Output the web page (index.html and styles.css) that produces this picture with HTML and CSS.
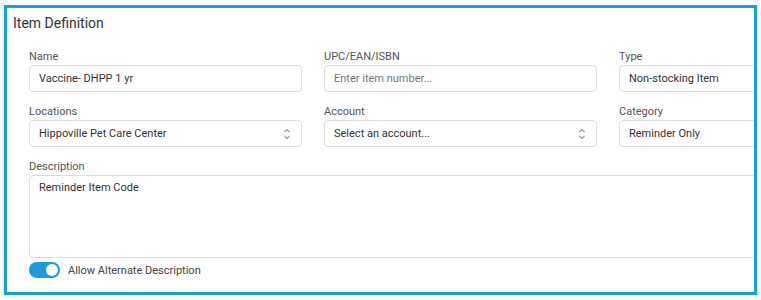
FILE: index.html
```html
<!DOCTYPE html>
<html lang="en">
<head>
    <meta charset="UTF-8">
    <meta name="viewport" content="width=device-width, initial-scale=1.0">
    <title>Item Definition</title>
    <link rel="stylesheet" href="styles.css">
</head>
<body>
    <div class="panel">
        <h2 class="panel-title">Item Definition</h2>

        <div class="form-grid">
            <div class="field">
                <label>Name</label>
                <div class="input">Vaccine- DHPP 1 yr</div>
            </div>
            <div class="field">
                <label>UPC/EAN/ISBN</label>
                <div class="input placeholder">Enter item number...</div>
            </div>
            <div class="field">
                <label>Type</label>
                <div class="input">Non-stocking Item</div>
            </div>

            <div class="field">
                <label>Locations</label>
                <div class="input select">
                    <span>Hippoville Pet Care Center</span>
                    <svg class="chevrons" width="8" height="12" viewBox="0 0 8 12"><polyline points="1.5,4 4,1.5 6.5,4"/><polyline points="1.5,8 4,10.5 6.5,8"/></svg>
                </div>
            </div>
            <div class="field">
                <label>Account</label>
                <div class="input select">
                    <span>Select an account...</span>
                    <svg class="chevrons" width="8" height="12" viewBox="0 0 8 12"><polyline points="1.5,4 4,1.5 6.5,4"/><polyline points="1.5,8 4,10.5 6.5,8"/></svg>
                </div>
            </div>
            <div class="field">
                <label>Category</label>
                <div class="input">Reminder Only</div>
            </div>

            <div class="field wide">
                <label>Description</label>
                <div class="input textarea">Reminder Item Code</div>
            </div>
        </div>

        <div class="toggle-row">
            <span class="toggle"><span class="knob"></span></span>
            <span class="toggle-label">Allow Alternate Description</span>
        </div>
    </div>
</body>
</html>
```

FILE: styles.css
```css
body {
    margin: 0;
    background-color: white;
    font-family: Roboto, "Liberation Sans", Arial, sans-serif;
}

.panel {
    box-sizing: border-box;
    width: 753px;
    height: 290px;
    margin: 5px 0 0 4px;
    border: 3px solid #16a1dd;
    box-shadow: 0 1px 2px rgba(0,0,0,0.25);
    overflow: hidden;
    padding: 6px 6px;
}

.panel-title {
    margin: 0;
    font-size: 14px;
    font-weight: normal;
    line-height: 18px;
    color: #333;
}

.form-grid {
    display: grid;
    grid-template-columns: repeat(3, 273px);
    column-gap: 22px;
    row-gap: 11px;
    margin: 16px 0 0 16px;
}

.field {
    display: flex;
    flex-direction: column;
}

.field.wide {
    grid-column: 1 / -1;
}

.field label {
    font-size: 11px;
    line-height: 14px;
    color: #555;
    padding-top: 2px;
    margin-bottom: 1px;
}

.input {
    box-sizing: border-box;
    height: 27px;
    display: flex;
    align-items: center;
    padding: 0 9px;
    border: 1px solid #dedede;
    border-radius: 4px;
    font-size: 11px;
    color: #333;
    background-color: white;
}

.placeholder {
    color: #777;
}

.select {
    justify-content: space-between;
}

.chevrons {
    fill: none;
    stroke: #999;
    stroke-width: 1.2;
    margin-right: 1px;
}

.textarea {
    height: 83px;
    align-items: flex-start;
    padding-top: 5px;
}

.toggle-row {
    display: flex;
    align-items: center;
    gap: 8px;
    margin: 4px 0 0 16px;
}

.toggle {
    position: relative;
    box-sizing: border-box;
    width: 31px;
    height: 16px;
    border-radius: 8px;
    background-color: #1a9ddc;
}

.knob {
    position: absolute;
    top: 2px;
    right: 2px;
    width: 12px;
    height: 12px;
    border-radius: 50%;
    background-color: white;
}

.toggle-label {
    font-size: 11px;
    color: #444;
}
```
